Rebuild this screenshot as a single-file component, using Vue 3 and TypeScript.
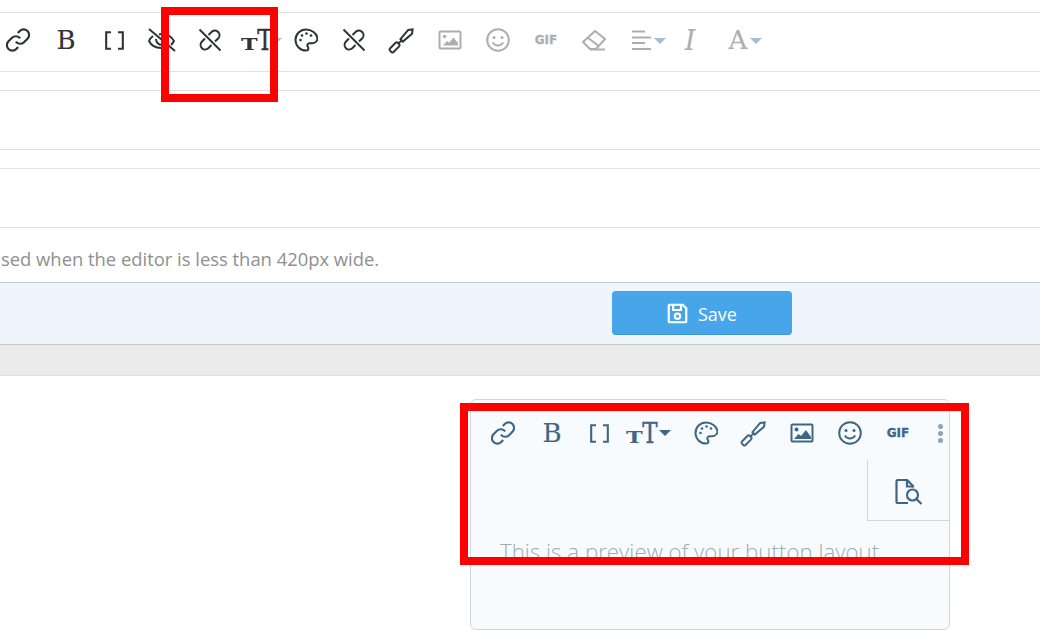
<script setup lang="ts">
type Tool = {
  id: string;
  icon?: string;
  text?: string;
  caret?: boolean;
  wide?: boolean;
  muted?: boolean;
};

// buttons of the full toolbar, in the order they are shown
const mainTools: Tool[] = [
  { id: 'link', icon: 'link' },
  { id: 'bold', text: 'B' },
  { id: 'code', icon: 'brackets' },
  { id: 'hide', icon: 'eye-slash' },
  { id: 'unlink', icon: 'unlink' },
  { id: 'size', caret: true },
  { id: 'palette', icon: 'palette' },
  { id: 'unlink2', icon: 'unlink' },
  { id: 'brush', icon: 'brush' },
  { id: 'image', icon: 'image', muted: true },
  { id: 'smile', icon: 'smile', muted: true },
  { id: 'gif', text: 'GIF', muted: true },
  { id: 'eraser', icon: 'eraser', muted: true },
  { id: 'align', icon: 'align', caret: true, muted: true },
  { id: 'italic', text: 'I', muted: true },
  { id: 'color', text: 'A', caret: true, muted: true }
];

const previewTools: Tool[] = [
  { id: 'link', icon: 'link' },
  { id: 'bold', text: 'B' },
  { id: 'code', icon: 'brackets' },
  { id: 'size', caret: true, wide: true },
  { id: 'palette', icon: 'palette' },
  { id: 'brush', icon: 'brush' },
  { id: 'image', icon: 'image-fill' },
  { id: 'smile', icon: 'smile' },
  { id: 'gif', text: 'GIF' }
];
</script>

<template>
  <svg class="sprite" aria-hidden="true">
    <symbol id="i-link" viewBox="1 1 22 22">
      <path d="M10 13.500a5 5 0 0 0 7.500.5l3.200-3.200a5 5 0 0 0-7.100-7.100l-1.800 1.800" />
      <path d="M14 10.500a5 5 0 0 0-7.500-.5l-3.200 3.200a5 5 0 0 0 7.100 7.100l1.800-1.800" />
    </symbol>
    <symbol id="i-unlink" viewBox="0 0 24 24">
      <path d="M1.500 1.500 22.500 22.500" />
      <path d="M10.500 7 13.800 3.800A4.600 4.600 0 0 1 20.300 10.300L17 13.500" />
      <path d="M7 10.500 3.800 13.800A4.600 4.600 0 0 0 10.300 20.300L13.500 17" />
    </symbol>
    <symbol id="i-brackets" viewBox="0 0 24 24">
      <path d="M8 2.500H2.500V21.500H8" />
      <path d="M16 2.500H21.500V21.500H16" />
    </symbol>
    <symbol id="i-eye-slash" viewBox="0 0 28 24">
      <path d="M1 1 27 23" />
      <path d="M5 8C3 9.500 1.500 11.500 1 13c2 4 6 7 12 7 2 0 3.500-.3 5-1" />
      <path d="M8 11a6 6 0 0 0 6 6" />
      <path d="M11 6.500c1-.2 2-.5 3-.5 6 0 10 3.500 12 7-.5 1-1.500 2.500-3 4" />
      <path d="M17 8.500a6 6 0 0 1 3 5.500" />
    </symbol>
    <symbol id="i-palette" viewBox="0 0 24 24">
      <path d="M12 1.500C6.200 1.500 1.500 6.200 1.500 12S6.200 22.500 12 22.500c1.500 0 2.400-1 2.400-2.200 0-.6-.2-1-.5-1.400-.4-.4-.6-.9-.6-1.400 0-1.300 1-2.300 2.300-2.300h2.400c3.200 0 5.500-2.400 5.500-5.200C22.500 5.300 17.800 1.500 12 1.500z" />
      <circle class="dot" cx="6.500" cy="12" r="1.300" />
      <circle class="dot" cx="8" cy="7.500" r="1.300" />
      <circle class="dot" cx="12.500" cy="5.500" r="1.300" />
      <circle class="dot" cx="17" cy="7.500" r="1.300" />
    </symbol>
    <symbol id="i-brush" viewBox="0 0 24 24" overflow="visible">
      <g transform="rotate(45 12 12)">
        <rect x="9.500" y="17" width="5" height="11" rx="1.500" />
        <path d="M12 17V12.500" />
        <path d="M10.300 12.500h3.400l1-12L12-3 9.300 .5z" />
      </g>
    </symbol>
    <symbol id="i-image" viewBox="0 0 24 24">
      <rect x="1.500" y="3.500" width="21" height="17" rx="1" />
      <circle class="dot" cx="6.500" cy="8.500" r="1.800" />
      <path class="dot" d="M5 17.500 9 13l2 1.800L15.500 9.500 20 15v2.500z" />
    </symbol>
    <symbol id="i-image-fill" viewBox="0 0 24 24">
      <rect x="1.500" y="3.500" width="21" height="17" rx="1" />
      <circle class="dot" cx="6.500" cy="8.500" r="2" />
      <path class="dot" d="M4 18 8.500 13l2.500 2 5-6 5 7v2z" />
    </symbol>
    <symbol id="i-smile" viewBox="0 0 24 24">
      <circle cx="12" cy="12" r="10.800" />
      <circle class="dot" cx="8" cy="9.500" r="1.500" />
      <circle class="dot" cx="16" cy="9.500" r="1.500" />
      <path d="M6.800 14.500c1.300 2 3.200 3 5.200 3s3.900-1 5.200-3" />
    </symbol>
    <symbol id="i-eraser" viewBox="0 0 24 24">
      <path d="M1 14 13 3l10 8-9 10H8z" />
      <path d="M5.500 9.500 16 17.500" />
      <path d="M8 21.500H23" />
    </symbol>
    <symbol id="i-align" viewBox="0 0 24 24">
      <path d="M2 3.500H15" />
      <path d="M2 9.500H21" />
      <path d="M2 15H15" />
      <path d="M2 21H21" />
    </symbol>
    <symbol id="i-save" viewBox="0 0 24 24">
      <path d="M3 2h15l4 4v15a1 1 0 0 1-1 1H3a1 1 0 0 1-1-1V3a1 1 0 0 1 1-1z" />
      <path d="M7 2v6h9V2" />
      <circle cx="12" cy="15" r="3" />
    </symbol>
    <symbol id="i-doc-search" viewBox="0 0 28 26">
      <path d="M13 24H3a1.500 1.500 0 0 1-1.500-1.500v-20A1.500 1.500 0 0 1 3 1h9l6 6v1.500" />
      <path d="M12 1v6.500h6" />
      <circle cx="17.500" cy="16" r="5.500" />
      <path d="M21.500 20 26.500 25" />
    </symbol>
  </svg>

  <div class="page">
    <div class="editor-row toolbar-row">
      <div class="toolbar">
        <span
          v-for="tool in mainTools"
          :key="tool.id"
          class="tool"
          :class="{ muted: tool.muted }"
        >
          <svg v-if="tool.icon" class="icon" :class="`ic-${tool.icon}`"><use :href="`#i-${tool.icon}`" /></svg>
          <span v-else-if="tool.text" :class="tool.text === 'GIF' ? 'gif' : tool.text === 'I' ? 'glyph italic' : 'glyph'">{{ tool.text }}</span>
          <span v-else class="size"><small>T</small><b>T</b></span>
          <i v-if="tool.caret" class="caret"></i>
        </span>
      </div>
    </div>
    <div class="editor-row"></div>
    <div class="editor-row last"></div>
    <p class="hint">sed when the editor is less than 420px wide.</p>

    <div class="save-bar">
      <button class="save" type="button">
        <svg class="save-icon"><use href="#i-save" /></svg>
        Save
      </button>
    </div>
    <div class="divider"></div>

    <div class="preview">
      <div class="toolbar preview-tools">
        <span
          v-for="tool in previewTools"
          :key="tool.id"
          class="tool"
          :class="{ wide: tool.wide }"
        >
          <svg v-if="tool.icon" class="icon" :class="`ic-${tool.icon}`"><use :href="`#i-${tool.icon}`" /></svg>
          <span v-else-if="tool.text" :class="tool.text === 'GIF' ? 'gif' : 'glyph'">{{ tool.text }}</span>
          <span v-else class="size"><small>T</small><b>T</b></span>
          <i v-if="tool.caret" class="caret"></i>
        </span>
        <span class="more"><i></i><i></i><i></i></span>
      </div>
      <div class="side">
        <div class="side-btn">
          <svg class="doc-search"><use href="#i-doc-search" /></svg>
        </div>
      </div>
      <p class="preview-text">This is a preview of your button layout</p>
    </div>

    <!-- annotations drawn on top of the screenshot -->
    <div class="mark mark-a"></div>
    <div class="mark mark-b"></div>
  </div>
</template>

<style>
body {
  margin: 0;
  background: #fff;
  overflow: hidden;
}
</style>

<style scoped>
.sprite {
  position: absolute;
  width: 0;
  height: 0;
}

.page {
  position: relative;
  height: 638px;
  overflow: hidden;
  padding-top: 12px;
  box-sizing: border-box;
  font-family: "Open Sans", "Noto Sans", sans-serif;
}

.editor-row {
  height: 60px;
  box-sizing: border-box;
  border-top: 1px solid #e0e0e0;
  border-bottom: 1px solid #e0e0e0;
  margin-bottom: 18px;
}

.editor-row.last {
  margin-bottom: 0;
}

.toolbar {
  display: flex;
  align-items: center;
}

.toolbar-row .toolbar {
  height: 54px;
  margin-left: -6px;
}

.tool {
  position: relative;
  width: 48px;
  height: 48px;
  flex: none;
  display: flex;
  align-items: center;
  justify-content: center;
  color: #303336;
}

.tool.muted {
  color: #aeaeae;
}

.icon {
  width: 24px;
  height: 24px;
  fill: none;
  stroke: currentColor;
  stroke-width: 2;
  overflow: visible;
}

.dot {
  fill: currentColor;
  stroke: none;
}

.ic-eye-slash {
  width: 28px;
}

.ic-brackets {
  width: 21px;
  height: 21px;
  stroke-width: 2.400;
}

.glyph {
  font-family: "DejaVu Serif", serif;
  font-size: 26px;
  line-height: 1;
  -webkit-text-stroke: 0.15px currentColor;
}

.glyph.italic {
  font-style: italic;
  font-size: 27px;
}

.size {
  display: flex;
  align-items: baseline;
  font-family: "DejaVu Serif", serif;
  line-height: 1;
}

.size small {
  display: inline-block;
  font-size: 16px;
  font-weight: 700;
  transform: translateX(1.500px) scaleX(1.400);
  margin-right: 2.300px;
}

.size b {
  display: inline-block;
  font-size: 27px;
  font-weight: 400;
  transform: scaleX(0.85);
  -webkit-text-stroke: 0.4px currentColor;
}

.gif {
  font-family: "DejaVu Sans", sans-serif;
  font-size: 12px;
  font-weight: 700;
  -webkit-text-stroke: 0.3px currentColor;
}

.caret {
  position: absolute;
  left: 36px;
  top: 22px;
  border-left: 6px solid transparent;
  border-right: 6px solid transparent;
  border-top: 6px solid #a9bccb;
}

.hint {
  margin: 0;
  height: 54px;
  box-sizing: border-box;
  padding: 19px 0 0 1px;
  font-size: 18.400px;
  line-height: 24px;
  color: #8f8f8f;
  white-space: nowrap;
}

.save-bar {
  height: 63px;
  box-sizing: border-box;
  border-top: 1px solid #c8c8c8;
  border-bottom: 1px solid #c8c8c8;
  background: #eef5fd;
  padding: 8px 0 0 612px;
}

.save {
  width: 180px;
  height: 44px;
  display: flex;
  align-items: center;
  justify-content: center;
  gap: 10px;
  padding: 1px 0 0;
  border: 1px solid #47a5ea;
  border-bottom-color: #3d97d9;
  border-radius: 4px;
  background: #47a5ea;
  color: #fff;
  font: inherit;
  font-size: 18px;
}

.save-icon {
  width: 21px;
  height: 21px;
  fill: none;
  stroke: #fff;
  stroke-width: 2.500;
}

.divider {
  height: 31px;
  box-sizing: border-box;
  border-bottom: 1px solid #e0e0e0;
  background: #ebebeb;
}

.preview {
  margin: 23px 0 0 470px;
  width: 480px;
  height: 231px;
  box-sizing: border-box;
  border: 1px solid #d3d6d9;
  border-radius: 6px;
  background: #f8fbfe;
}

.preview-tools {
  padding: 9px 0 0 8px;
}

.preview-tools .tool {
  color: #3e6685;
}

.preview-tools .glyph {
  margin-left: 2px;
}

.preview-tools .tool.wide {
  width: 59px;
  justify-content: flex-start;
  padding-left: 4px;
  box-sizing: border-box;
}

.preview-tools .caret {
  top: 21px;
  border-top-color: #3e6685;
}

.more {
  flex: none;
  width: 20px;
  margin-left: 8px;
  display: flex;
  flex-direction: column;
  align-items: center;
  gap: 2px;
}

.more i {
  width: 5px;
  height: 5px;
  border-radius: 50%;
  background: #8ca4b8;
}

.side {
  display: flex;
  justify-content: flex-end;
  margin-top: 3px;
}

.side-btn {
  width: 82px;
  height: 61px;
  box-sizing: border-box;
  padding-top: 3px;
  border-left: 1px solid #d3d6d9;
  border-bottom: 1px solid #d3d6d9;
  display: flex;
  align-items: center;
  justify-content: center;
}

.doc-search {
  width: 28px;
  height: 26px;
  fill: none;
  stroke: #3e6685;
  stroke-width: 2.200;
}

.preview-text {
  margin: 16px 0 0 29px;
  font-size: 22.300px;
  font-weight: 300;
  line-height: 30px;
  color: #a3abb3;
  white-space: nowrap;
}

.mark {
  position: absolute;
  box-sizing: border-box;
  border: 8px solid #f00;
}

.mark-a {
  left: 161px;
  top: 7px;
  width: 117px;
  height: 95px;
}

.mark-b {
  left: 460px;
  top: 403px;
  width: 509px;
  height: 162px;
}
</style>
